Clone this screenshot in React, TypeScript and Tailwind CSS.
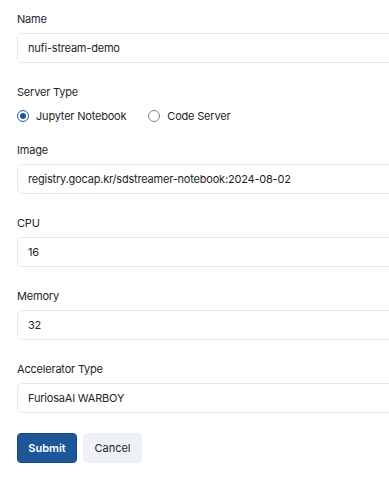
import React, { useState } from 'react';

const fields = [
  { label: 'Image', value: 'registry.gocap.kr/sdstreamer-notebook:2024-08-02' },
  { label: 'CPU', value: '16' },
  { label: 'Memory', value: '32' },
  { label: 'Accelerator Type', value: 'FuriosaAI WARBOY' },
];

function Field({ label, value }: { label: string; value: string }) {
  return (
    <div className="flex flex-col gap-1">
      <label className="text-[11px] leading-5 tracking-[-0.2px] text-[#1f2328]">{label}</label>
      <input
        defaultValue={value}
        className="h-[30px] w-[420px] rounded-[5px] border border-[#e6e9ee] bg-white px-[10px] text-[11px] tracking-[-0.2px] text-[#1f2328] outline-none"
      />
    </div>
  );
}

function Radio({ checked, label, onClick }: { checked: boolean; label: string; onClick: () => void }) {
  return (
    <button type="button" onClick={onClick} className="flex items-center gap-[7px]">
      <span
        className={
          checked
            ? 'flex h-[12px] w-[12px] items-center justify-center rounded-full border border-[#1d5799]'
            : 'flex h-[12px] w-[12px] items-center justify-center rounded-full border border-[#7b8594]'
        }
      >
        {checked && <span className="h-[6px] w-[6px] rounded-full bg-[#1d5799]" />}
      </span>
      <span className="text-[11px] leading-5 tracking-[-0.2px] text-[#1f2328]">{label}</span>
    </button>
  );
}

export default function App() {
  const [type, setType] = useState('jupyter');

  return (
    <div className="w-full overflow-hidden bg-white" style={{ fontFamily: 'Inter, "Noto Sans", sans-serif' }}>
      <form className="flex flex-col px-[17px] pt-[9px] pb-5" onSubmit={(e) => e.preventDefault()}>
        <Field label="Name" value="nufi-stream-demo" />

        <div className="mt-[19px] flex flex-col gap-1">
          <span className="text-[11px] leading-5 tracking-[-0.2px] text-[#1f2328]">Server Type</span>
          <div className="flex items-center gap-[22px]">
            <Radio checked={type === 'jupyter'} label="Jupyter Notebook" onClick={() => setType('jupyter')} />
            <Radio checked={type === 'code'} label="Code Server" onClick={() => setType('code')} />
          </div>
        </div>

        <div className="mt-[14px] flex flex-col gap-[19px]">
          {fields.map((f) => (
            <Field key={f.label} label={f.label} value={f.value} />
          ))}
        </div>

        <div className="mt-[20px] flex gap-[6px]">
          <button className="h-[30px] w-[60px] rounded-[4px] border border-[#174a85] bg-[#1d5799] text-[11px] font-semibold text-white">
            Submit
          </button>
          <button type="button" className="h-[30px] w-[59px] rounded-[4px] bg-[#eef2f6] text-[11px] text-[#1f2328]">
            Cancel
          </button>
        </div>
      </form>
    </div>
  );
}
